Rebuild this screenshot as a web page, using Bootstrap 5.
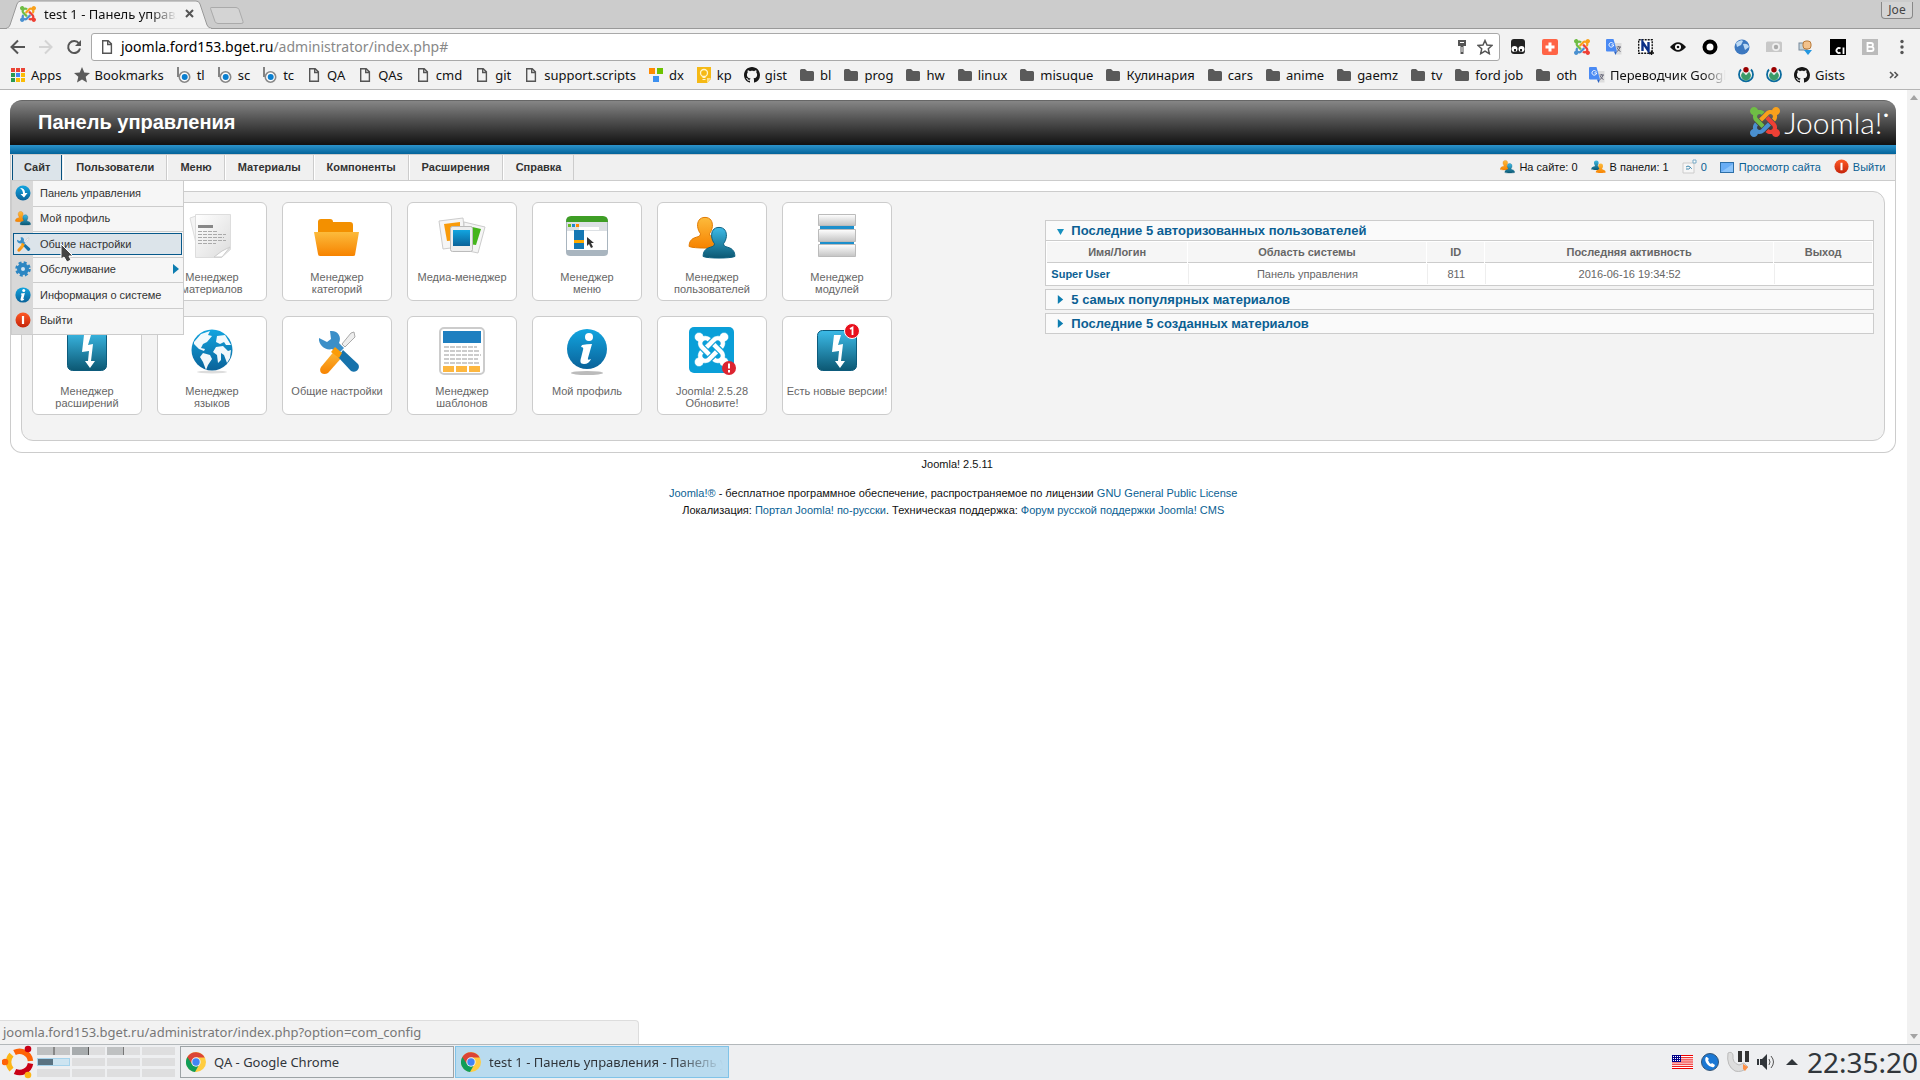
<!DOCTYPE html>
<html lang="ru">
<head>
<meta charset="utf-8">
<meta name="viewport" content="width=device-width, initial-scale=1">
<title>test 1 - Панель управления</title>
<link rel="stylesheet" href="https://cdn.jsdelivr.net/npm/bootstrap@5.3.0/dist/css/bootstrap.min.css">
<style>
:root{--ui:"Noto Sans",sans-serif;--web:"Liberation Sans",Arial,sans-serif;--line:#ccc;--link:#0b5f93}
body{font-family:var(--web);font-size:11px;line-height:16px;color:#111;background:#fff;overflow:hidden}
a{text-decoration:none;color:var(--link)}
svg{display:block;flex:none}
.chrome-ui{font-family:var(--ui);font-size:13px;background:#f2f2f2;color:#111}
.tabstrip{height:29px;background:#ccc;border-bottom:1px solid #999}
.tab{width:204px;height:29px;margin-left:6px;margin-bottom:-1px;padding:0 16px 2px 14px;font-size:13px}
.tab-shape,.tab>*{position:relative}
.tab .tab-shape{position:absolute;left:0;top:0}
.fade-end{white-space:nowrap;overflow:hidden;-webkit-mask-image:linear-gradient(90deg,#000 80%,transparent);mask-image:linear-gradient(90deg,#000 80%,transparent)}
.plain{border:0;background:none;padding:0;color:#555}
.new-tab{padding-top:7px}
.profile{margin:2px 7px 0 0;height:17px;width:32px;border:1px solid #888;border-top:0;border-radius:0 0 4px 4px;background:#d4d4d4;font-size:12px;line-height:16px;color:#444;padding:0}
.toolbar{padding:4px 10px 1px 9px}
.nav-keys{gap:12px}
.omnibox{height:28px;background:#fff;border:1px solid #a9a9a9;border-radius:3px;padding:0 6px 0 8px;margin:0 10px 0 9px;gap:7px}
.url{position:relative;height:26px}
.url input{position:absolute;inset:0;width:100%;border:0;background:none;color:transparent;outline:0;padding:0}
.url span{line-height:26px;font-size:14px;color:#888}
.url b{font-weight:400;color:#000}
.bookmarks{height:28px;padding:0 10px 1px;gap:12px;border-bottom:1px solid #b5b5b5}
.bookmarks a{display:flex;align-items:center;gap:5px;color:#111;white-space:nowrap;line-height:20px}
.bookmarks .fade-end{width:116px}
.viewport{flex:1;min-height:0;position:relative}
.scroller{width:15px;background:#f1f1f1;padding:5px 0}
.page{padding:10px 11px 0 10px;min-width:0}
.site-head{height:45px;border-radius:12px 12px 0 0;background:linear-gradient(#868686,#555 40%,#111);border-top:1px solid #666;padding:0 7px 2px 28px}
.site-head h1{font-size:20px;line-height:42px;font-weight:700;color:#fff;margin:0}
.wordmark{font-family:Lato,sans-serif;font-weight:300;font-size:30px;line-height:30px;color:#fff}
.wordmark sup{font-size:12px;top:-15px}
.blueline{height:9px;background:linear-gradient(#2c93cb,#02639a)}
.menubar{height:27px;background:#f0f0f0;border:1px solid var(--line)}
.main-menu{padding-left:1px}
.top-item{display:block;height:25px;line-height:25px;padding:0 12px;font-weight:700;color:#333;border-right:1px solid var(--line);border-left:1px solid #fff}
.top-item.current{padding:0 11px;margin-right:1px;background:#dce4ea;border:1px solid #07517f;border-width:0 1px}
.status a,.status span{display:flex;align-items:center;gap:4px}
.status{gap:13px;padding:0 10px 2px 0}
.frame{border:1px solid var(--line);border-top:0;border-radius:0 0 12px 12px;padding:10px 10px 11px}
.inner{border:1px solid var(--line);border-radius:12px;background:#f3f3f3;padding:10px;min-height:250px}
.tiles{gap:15px;width:55%;padding-right:100px;align-content:flex-start}
.tile{width:110px;height:99px;background:#fff;border:1px solid var(--line);border-radius:6px;color:#666;text-align:center;line-height:12px;padding-top:10px}
.tile:hover{color:#0b5f93}
.tile svg{margin:0 auto 10px}
.side{width:45%;padding-top:18px;display:flex;flex-direction:column;gap:3px}
.slider{border:1px solid var(--line);background:#fafafa}
.slider h2{font-size:13px;line-height:19px;font-weight:700;margin:0}
.slider h2 a{display:flex;align-items:center;gap:6px;padding-left:10px}
.grid-data{width:100%;border-top:1px solid var(--line);background:#fff;color:#666;text-align:center;border-collapse:separate;border-spacing:1px}
.grid-data th{height:21px;padding:0;background:#f6f6f6;border-bottom:1px solid var(--line)}
.grid-data td{height:20px;padding:0 4px;border-left:1px solid #eee}
.grid-data td:first-child{border:0;text-align:left;font-weight:700}
.submenu{position:absolute;left:0;top:26px;z-index:5;width:173px;height:154px;display:grid;grid-template-rows:repeat(6,1fr);border:1px solid var(--line);border-top:0;background:linear-gradient(90deg,#d8d8d8 21px,#f6f6f6 21px);margin:0;padding:0;list-style:none}
.submenu li{position:relative;background:linear-gradient(var(--line),var(--line)) 21px 100%/200px 1px no-repeat;padding:1px 1px 3px}
.submenu li:last-child{background:none}
.submenu a{display:flex;align-items:center;height:100%;gap:9px;color:#333;padding:0 1px 0 1px;border:1px solid transparent}
.submenu .hot{border-color:#07598b;background:#dce4ea}
.footer-text{text-align:center;padding-top:3px;line-height:17px}
.pointer-mark{position:absolute;left:60px;top:153px;z-index:9}
.hover-url{position:absolute;left:0;bottom:0;width:639px;height:24px;border:1px solid #ddd;border-width:1px 1px 0 0;border-radius:0 4px 0 0;background:#f2f2f2;color:#777;font:13px/23px var(--ui);padding-left:3px}
.taskbar{height:36px;background:#eeeff1;border-top:1px solid #b3b8bb;font-family:var(--ui);font-size:13px;color:#31363b;padding:0 0 1px 2px}
.pager{display:grid;grid-template-columns:repeat(4,33px);gap:3px 2px;margin:0 5px 0 3px}
.pager i{height:8px;background:#dededf}
.pager .w1{background:linear-gradient(90deg,#bfc1c2 50%,#888 50%,#888 54%,#c4c5c6 54%)}
.pager .w2{background:linear-gradient(90deg,#a7abad 48%,#555 48%,#555 52%,#dededf 52%)}
.pager .w3{background:linear-gradient(90deg,#bfc1c2 48%,#777 48%,#777 52%,#dededf 52%)}
.pager .now{background:linear-gradient(90deg,#5a7382 50%,#cde4f1 50%);outline:1px solid #a6d3ec;outline-offset:-1px}
.task{width:274px;height:32px;border:1px solid #9da3a6;background:#eeeff1;color:#31363b;text-align:left;padding:0 5px;margin-right:1px;border-radius:0}
.task.on{background:#b9dbef;border-color:#80c3e8}
.clock{font-size:28px;line-height:34px;margin-right:2px}
</style>
<script src="https://cdn.jsdelivr.net/npm/bootstrap@5.3.0/dist/js/bootstrap.bundle.min.js"></script>
</head>
<body class="vh-100 d-flex flex-column">
<svg width="0" height="0" class="position-absolute" aria-hidden="true">
<defs>
<linearGradient id="gBlue" x2="0" y2="1"><stop stop-color="#12a5e0"/><stop offset="1" stop-color="#0a6299"/></linearGradient>
<linearGradient id="gTeal" x2="0" y2="1"><stop stop-color="#3cbbe8"/><stop offset="1" stop-color="#0c5873"/></linearGradient>
<linearGradient id="gOr" x2="0" y2="1"><stop stop-color="#fcbb3c"/><stop offset="1" stop-color="#f78300"/></linearGradient>
<linearGradient id="gRed" x2="0" y2="1"><stop stop-color="#ff5a26"/><stop offset="1" stop-color="#c4240a"/></linearGradient>
<linearGradient id="gGrey" x2="0" y2="1"><stop stop-color="#fff"/><stop offset="1" stop-color="#c4c4c4"/></linearGradient>
<linearGradient id="gPaper" x2="1" y2="1"><stop stop-color="#fff"/><stop offset="1" stop-color="#dcdcdc"/></linearGradient>
<path id="jarm" d="M16.719 14.759L14.22 17.26l-2.37 2.37-.462.466c-1.368 1.365-3.297 1.83-5.047 1.397-.327 1.424-1.604 2.49-3.13 2.49C1.438 23.983 0 22.547 0 20.772c0-1.518 1.055-2.789 2.469-3.123-.446-1.76.016-3.705 1.396-5.08l.179-.18 2.37 2.37-.184.181c-.769.779-.769 2.024 0 2.789.771.78 2.022.78 2.787 0l.465-.465 2.367-2.371 2.502-2.506z"/>
</defs>
<symbol id="joomla" viewBox="0 0 24 24"><use href="#jarm" fill="#4a90d0"/><use href="#jarm" fill="#6fbd45" transform="rotate(90 12 12)"/><use href="#jarm" fill="#f9a11b" transform="rotate(180 12 12)"/><use href="#jarm" fill="#ee4035" transform="rotate(270 12 12)"/></symbol>
<symbol id="file" viewBox="0 0 16 16"><path d="M3.700 1.700h5.500l3.200 3.200v9.400H3.700zM8.700 2v3.500H12" fill="none" stroke="#555" stroke-width="1.400"/></symbol>
<symbol id="folder" viewBox="0 0 16 16"><path d="M1 3.500Q1 2 2.500 2H6l2 2h5.500Q15 4 15 5.500v7q0 1.500-1.500 1.500h-11Q1 14 1 12.500z" fill="#5a5a5a"/></symbol>
<symbol id="bico" viewBox="0 0 16 16"><path d="M2 0v10" stroke="#777" stroke-width="1.800"/><circle cx="8.500" cy="10" r="5.200" fill="#fff" stroke="#888" stroke-width="1.600"/><circle cx="8.700" cy="10" r="3" fill="#0a7fd0"/></symbol>
<symbol id="github" viewBox="0 0 16 16"><path fill="#161616" d="M8 0C3.580 0 0 3.580 0 8c0 3.540 2.290 6.530 5.470 7.590.4.070.55-.17.55-.38 0-.19-.01-.82-.01-1.490-2.010.37-2.530-.49-2.690-.94-.09-.23-.48-.94-.82-1.130-.28-.15-.68-.52-.01-.53.63-.01 1.080.58 1.230.82.72 1.210 1.870.87 2.330.66.07-.52.28-.87.51-1.070-1.780-.2-3.640-.89-3.640-3.950 0-.87.31-1.590.82-2.150-.08-.2-.36-1.020.08-2.120 0 0 .67-.21 2.200.82.64-.18 1.320-.27 2-.27s1.360.09 2 .27c1.530-1.040 2.200-.82 2.200-.82.44 1.100.16 1.920.08 2.120.51.56.82 1.270.82 2.150 0 3.070-1.870 3.750-3.650 3.950.29.25.54.73.54 1.480 0 1.070-.01 1.930-.01 2.200 0 .21.15.46.55.38A8.010 8.010 0 0 0 16 8c0-4.420-3.580-8-8-8z"/></symbol>
<symbol id="gtr" viewBox="0 0 16 16"><path d="M7 4h8.500v11.500H9z" fill="#dcdcdc"/><path d="M0 1Q0 0 1 0h6.500l3.500 12.500H1Q0 12.500 0 11.500z" fill="#4a8af4"/><path d="M8 12.500h3L9.500 16z" fill="#2b63c4"/><path d="M7.600 5.900H5.400M7.300 4.700A2.300 2.300 0 1 0 7.600 6" stroke="#fff" fill="none"/><path d="M10.500 8h4.500M12.700 7v1M14 8q-.5 3-3 4.500M11.300 9q1 2.500 3.200 3.500" stroke="#667" fill="none"/></symbol>
<symbol id="wm" viewBox="0 0 16 16"><path d="M3 2.500a7 7 0 1 0 10 0" fill="none" stroke="#0a6a9e" stroke-width="1.800"/><path d="M4.800 5.500a4.700 4.700 0 0 0 2.700 7.700V8zM11.200 5.500a4.700 4.700 0 0 1-2.700 7.700V8z" fill="#3a9a68" stroke="#3a9a68"/><circle cx="8" cy="2.700" r="2.700" fill="#900"/></symbol>
<symbol id="man" viewBox="0 0 24 24"><path d="M12 1c4 0 5.500 3 5.200 6.500-.2 2-1.200 4-2 5 0 1.500 1 2 3 2.500 3.500 1 5 3 5 6.500-3 1.500-19.400 1.500-22.400 0 0-3.500 1.500-5.500 5-6.500 2-.5 3-1 3-2.500-.8-1-1.800-3-2-5C6.500 4 8 1 12 1z"/></symbol>
<symbol id="users" viewBox="0 0 48 48"><use href="#man" x="0" y="0" width="34" height="40" fill="url(#gOr)" stroke="#e07800" stroke-width=".7"/><use href="#man" x="14" y="12" width="34" height="36" fill="url(#gTeal)" stroke="#0b5f80" stroke-width=".7"/></symbol>
<symbol id="users2" viewBox="0 0 48 48"><use href="#man" x="0" y="0" width="34" height="40" fill="url(#gTeal)"/><use href="#man" x="14" y="12" width="34" height="36" fill="url(#gOr)"/></symbol>
<symbol id="power" viewBox="0 0 16 16"><circle cx="8" cy="8" r="7.500" fill="url(#gRed)"/><path d="M8 4v8" stroke="#fff" stroke-width="2.200"/></symbol>
<symbol id="tools" viewBox="0 0 48 48"><path d="M41 5l-3 1-9 11 3 3L42 10z" fill="#eee" stroke="#aaa"/><path d="M23 22l8 6-16 18c-5 3-10-1-7-6z" fill="url(#gOr)"/><path d="M6 11l8 4 4-3-1-8c8-1 12 6 9 12l5 5-6 6-6-5c-6 2-14-4-13-11z" fill="#3b8fc8"/><path d="M30 23l15 14c3 4-2 10-7 7L25 30z" fill="#1672ab"/><path d="M22 20l7 6-3 5-8-6z" fill="#fb9c08"/></symbol>
<symbol id="info" viewBox="0 0 48 48"><ellipse cx="24" cy="46" rx="16" ry="2" fill="#bbb"/><circle cx="24" cy="22" r="20" fill="url(#gBlue)"/><circle cx="26" cy="10" r="4" fill="#fff"/><path d="M19 18q5-1 10-1l-4 14q-1 3 3 1-2 5-7 5c-4 0-4-3-3-6l2-8q1-3-2-3z" fill="#fff"/></symbol>
<symbol id="bolt" viewBox="0 0 48 48"><rect x="4.500" y="3.500" width="39" height="40" rx="5" fill="url(#gTeal)" stroke="#0d5b7c"/><path d="M21 8h7l-3 10 5-1-2 17h4l-5 7-5-7h3l1-10-7 1z" fill="#fff"/></symbol>
<symbol id="globe" viewBox="0 0 48 48"><ellipse cx="24" cy="45" rx="15" ry="1.500" fill="#ddd"/><circle cx="24" cy="23" r="20.500" fill="url(#gBlue)"/><path d="M6 15l7-8 9-3-2 4 4 1-5 6-4 2-2 4 4 1-1 2-5-2-5-5zM15 26l7 2 2 4-4 6-2 5-3-8-3-5zM29 9l8-1 6 10-5 0-2-3-4 2-4-2zM28 20l7-1 5 5 3-1-1 8-3 5-3-8-3-2v7l-3 3-1-8-4-3z" fill="#fff" opacity=".95"/></symbol>
<symbol id="tri" viewBox="0 0 8 10"><path d="M1 0l6 5-6 5z" fill="#0d7db0"/></symbol>
<symbol id="chrome" viewBox="0 0 20 20"><circle cx="10" cy="10" r="10" fill="#ffcd40"/><path d="M10 10L1.300 5A10 10 0 0 0 9 20l4.500-8z" fill="#109d58"/><path d="M1.300 5A10 10 0 0 1 18.700 5.500H10L6 12z" fill="#db4437"/><circle cx="10" cy="10" r="4.700" fill="#f1f1f1"/><circle cx="10" cy="10" r="3.700" fill="#4285f4"/></symbol>
</svg>

<header class="chrome-ui">
  <div class="tabstrip d-flex align-items-start">
    <div class="tab position-relative d-flex align-items-center">
      <svg class="tab-shape" width="206" height="29"><path d="M0 28.500Q3 28 4 25L11 4q1-3 4-3h175q3 0 4 3l7 21q1 3 5 3.500" fill="#f2f2f2" stroke="#999"/><path d="M1 29h204" stroke="#f2f2f2"/></svg>
      <svg width="16" height="16"><use href="#joomla"/></svg>
      <span class="fade-end ms-2 me-2 flex-fill">test 1 - Панель управления</span>
      <button class="plain" aria-label="Закрыть вкладку"><svg width="9" height="9"><path d="M1 1l7 7M8 1L1 8" stroke="#555" stroke-width="2"/></svg></button>
    </div>
    <button class="plain new-tab" aria-label="Новая вкладка"><svg width="34" height="17"><path d="M.500 1.500Q0 .500 2 .500h24q2 0 3 2l4 12q1 2-2 2H8q-2 0-3-2z" fill="#d4d4d4" stroke="#aaa"/></svg></button>
    <button class="profile ms-auto">Joe</button>
  </div>
  <div class="toolbar d-flex align-items-center">
    <div class="nav-keys d-flex align-items-center">
      <button class="plain" aria-label="Назад"><svg width="17" height="16"><path d="M16 8H3M9 1.500L2.500 8 9 14.500" fill="none" stroke="#555" stroke-width="2"/></svg></button>
      <button class="plain" aria-label="Вперёд"><svg width="16" height="16"><path d="M1 8h12M7 1.500L13.500 8 7 14.500" fill="none" stroke="#d4d4d4" stroke-width="2"/></svg></button>
      <button class="plain" aria-label="Обновить"><svg width="16" height="16"><path d="M13 4.500A6 6 0 1 0 14 9.500" fill="none" stroke="#555" stroke-width="2"/><path d="M15 1v6H9z" fill="#555"/></svg></button>
    </div>
    <div class="omnibox d-flex align-items-center flex-fill">
      <svg width="14" height="16" viewBox="1 0 14 16"><use href="#file" width="16" height="16"/></svg>
      <label class="url flex-fill"><span><b>joomla.ford153.bget.ru</b>/administrator/index.php#</span><input type="text" aria-label="Адрес"></label>
      <div class="d-flex align-items-center gap-2"><svg width="14" height="16"><path d="M3 1h8v6H8.500v8h-3V7H3z" fill="#555"/><path d="M5 3.500h4M7 8v5" stroke="#fff"/></svg>
      <svg width="16" height="16"><path d="M8 1.500l2 4.500 5 .5-3.700 3.300 1 4.900L8 12.200l-4.300 2.500 1-4.900L1 6.500 6 6z" fill="none" stroke="#555" stroke-width="1.500"/></svg></div>
    </div>
    <div class="d-flex align-items-center gap-3">
      <svg width="16" height="16"><rect x="1" y="0" width="14" height="15" rx="3" fill="#222"/><circle cx="4.500" cy="10" r="3" fill="#fff"/><circle cx="11.500" cy="10" r="3" fill="#fff"/><path d="M4 10h2v2.500H4zM10 10h2v2.500h-2z" fill="#222"/></svg>
      <svg width="16" height="16"><rect width="16" height="16" rx="2" fill="#ff6446"/><path d="M8 3.500v9M3.500 8h9" stroke="#fff" stroke-width="3"/></svg>
      <svg width="16" height="16"><use href="#joomla"/></svg>
      <svg width="16" height="16"><use href="#gtr"/></svg>
      <svg width="16" height="16"><rect x=".7" y=".7" width="13.500" height="13.500" fill="#fff" stroke="#111" stroke-width="1.400" stroke-dasharray="2 1"/><path d="M4.500 12V3l6 9V3" fill="none" stroke="#0b2f86" stroke-width="2.400"/><path d="M11 14h5M13.500 11.500v5" stroke="#111" stroke-width="1.500"/></svg>
      <svg width="16" height="16"><path d="M0 8q8-9.500 16 0-8 9.500-16 0z" fill="#111"/><circle cx="8" cy="8" r="3" fill="#fff"/><circle cx="8" cy="8" r="1.300" fill="#111"/></svg>
      <svg width="16" height="16"><circle cx="8" cy="8" r="5.500" fill="#fff" stroke="#000" stroke-width="4"/></svg>
      <svg width="16" height="16"><circle cx="8" cy="8" r="7.500" fill="#3c78c0"/><path d="M2 4q5-4 7-2l-2 4-4 2zM9 5q5-1 6 3l-4 3z" fill="#bcd9f4"/></svg>
      <svg width="16" height="16"><path d="M0 4q0-1.500 1.500-1.500h13Q16 2.500 16 4v9H0z" fill="#c8c8c8"/><circle cx="10" cy="8" r="4" fill="#eee"/><circle cx="10" cy="8" r="2.200" fill="#aaa"/></svg>
      <svg width="16" height="16"><rect x="1" y="4" width="8" height="7" fill="#c5d4dc" stroke="#789"/><rect x="5" y="2" width="8" height="8" rx="3" fill="#f3c28c" stroke="#b87a3a"/><path d="M6 11h8l-4 5z" fill="#2497e0"/></svg>
      <svg width="16" height="16"><rect width="16" height="16" fill="#000"/><path d="M10.500 9.500a2.500 2.500 0 1 0 0 4M13.500 8.500V15" stroke="#fff" stroke-width="1.800" fill="none"/></svg>
      <svg width="16" height="16"><rect width="16" height="16" fill="#bbb"/><path d="M5.500 4h3.500a1.900 1.900 0 0 1 0 3.900H5.500zM5.500 7.900h4a2 2 0 0 1 0 4.100h-4z" fill="none" stroke="#fff" stroke-width="1.800"/></svg>
      <button class="plain" aria-label="Меню"><svg width="16" height="16"><g fill="#555"><circle cx="8" cy="2.500" r="1.700"/><circle cx="8" cy="8" r="1.700"/><circle cx="8" cy="13.500" r="1.700"/></g></svg></button>
    </div>
  </div>
  <nav class="bookmarks d-flex align-items-center">
    <a href="#"><svg width="16" height="16"><g fill="#ea4335"><path d="M1 1h4v4H1zM6 1h4v4H6zM11 1h4v4h-4z"/></g><path d="M1 6h4v4H1zM1 11h4v4H1z" fill="#2b9a50"/><path d="M6 6h4v4H6z" fill="#4285f4"/><path d="M11 6h4v4h-4zM6 11h4v4H6zM11 11h4v4h-4z" fill="#fbbc05"/></svg>Apps</a>
    <a href="#"><svg width="16" height="16"><path d="M8 0l2.300 5.500 5.700.5-4.300 3.800L13 15.500 8 12.500l-5 3 1.300-5.700L0 6l5.700-.5z" fill="#5a5a5a"/></svg>Bookmarks</a>
    <a href="#"><svg width="16" height="16"><use href="#bico"/></svg>tl</a>
    <a href="#"><svg width="16" height="16"><use href="#bico"/></svg>sc</a>
    <a href="#"><svg width="16" height="16"><use href="#bico"/></svg>tc</a>
    <a href="#"><svg width="16" height="16"><use href="#file"/></svg>QA</a>
    <a href="#"><svg width="16" height="16"><use href="#file"/></svg>QAs</a>
    <a href="#"><svg width="16" height="16"><use href="#file"/></svg>cmd</a>
    <a href="#"><svg width="16" height="16"><use href="#file"/></svg>git</a>
    <a href="#"><svg width="16" height="16"><use href="#file"/></svg>support.scripts</a>
    <a href="#"><svg width="16" height="16"><path d="M1 1h6v6H1z" fill="#ff8a00"/><path d="M9 1h6v6H9z" fill="#6cc200"/><path d="M5 9h6v6H5z" fill="#3d90f0"/></svg>dx</a>
    <a href="#"><svg width="16" height="16"><path d="M1 0h14v12l-4 4H1z" fill="#f5b915"/><path d="M15 11h-4v5z" fill="#ffe08a"/><circle cx="8" cy="6" r="3.500" fill="none" stroke="#fff5cc" stroke-width="1.300"/><path d="M6.500 10.500h3M6.500 12.500h3" stroke="#fff5cc"/></svg>kp</a>
    <a href="#"><svg width="16" height="16"><use href="#github"/></svg>gist</a>
    <a href="#"><svg width="16" height="16"><use href="#folder"/></svg>bl</a>
    <a href="#"><svg width="16" height="16"><use href="#folder"/></svg>prog</a>
    <a href="#"><svg width="16" height="16"><use href="#folder"/></svg>hw</a>
    <a href="#"><svg width="16" height="16"><use href="#folder"/></svg>linux</a>
    <a href="#"><svg width="16" height="16"><use href="#folder"/></svg>misuque</a>
    <a href="#"><svg width="16" height="16"><use href="#folder"/></svg>Кулинария</a>
    <a href="#"><svg width="16" height="16"><use href="#folder"/></svg>cars</a>
    <a href="#"><svg width="16" height="16"><use href="#folder"/></svg>anime</a>
    <a href="#"><svg width="16" height="16"><use href="#folder"/></svg>gaemz</a>
    <a href="#"><svg width="16" height="16"><use href="#folder"/></svg>tv</a>
    <a href="#"><svg width="16" height="16"><use href="#folder"/></svg>ford job</a>
    <a href="#"><svg width="16" height="16"><use href="#folder"/></svg>oth</a>
    <a href="#"><svg width="16" height="16"><use href="#gtr"/></svg><span class="fade-end">Переводчик Google</span></a>
    <a href="#" aria-label="Wikimedia"><svg width="16" height="16"><use href="#wm"/></svg></a>
    <a href="#" aria-label="Wikimedia"><svg width="16" height="16"><use href="#wm"/></svg></a>
    <a href="#"><svg width="16" height="16"><use href="#github"/></svg>Gists</a>
    <button class="plain ms-auto me-2" aria-label="Ещё закладки"><svg width="16" height="10"><path d="M4 2l3 3-3 3M8.500 2l3 3-3 3" fill="none" stroke="#555" stroke-width="1.600"/></svg></button>
  </nav>
</header>

<div class="viewport d-flex">
  <main class="page flex-fill">
    <div class="site-head d-flex align-items-center justify-content-between">
      <h1>Панель управления</h1>
      <div class="d-flex align-items-center gap-1"><svg width="30" height="30"><use href="#joomla"/></svg><span class="wordmark">Joomla!<sup>•</sup></span></div>
    </div>
    <div class="blueline"></div>
    <div class="menubar d-flex justify-content-between">
      <nav class="main-menu d-flex position-relative">
        <a class="top-item current" href="#">Сайт</a><a class="top-item" href="#">Пользователи</a><a class="top-item" href="#">Меню</a><a class="top-item" href="#">Материалы</a><a class="top-item" href="#">Компоненты</a><a class="top-item" href="#">Расширения</a><a class="top-item" href="#">Справка</a>
        <ul class="submenu">
          <li><a href="#"><svg width="16" height="16"><circle cx="8" cy="8" r="7.500" fill="url(#gBlue)"/><path d="M5 3q5 0 5 5h2.500L9 12.500 5.500 9H8Q8 5 5 3z" fill="#fff"/></svg>Панель управления</a></li>
          <li><a href="#"><svg width="16" height="16"><use href="#users"/></svg>Мой профиль</a></li>
          <li><a class="hot" href="#"><svg width="16" height="16"><use href="#tools"/></svg>Общие настройки</a></li>
          <li><a href="#"><svg width="16" height="16"><circle cx="8" cy="8" r="6" fill="none" stroke="#2c86c2" stroke-width="3.500" stroke-dasharray="2.700 2"/><circle cx="8" cy="8" r="4" fill="#cfe4f2" stroke="#2c86c2" stroke-width="4"/></svg>Обслуживание<svg class="ms-auto" width="8" height="10"><use href="#tri"/></svg></a></li>
          <li><a href="#"><svg width="16" height="16" viewBox="3 1 42 42"><use href="#info" width="48" height="48"/></svg>Информация о системе</a></li>
          <li><a href="#"><svg width="16" height="16"><use href="#power"/></svg>Выйти</a></li>
        </ul>
      </nav>
      <div class="status d-flex align-items-center">
        <span><svg width="15" height="15"><use href="#users"/></svg>На сайте: 0</span>
        <span><svg width="15" height="15"><use href="#users2"/></svg>В панели: 1</span>
        <a href="#"><svg width="15" height="15"><path d="M1 4h11v10H1z" fill="#f6f6f6" stroke="#ccc"/><path d="M4 8q2-2 4 0t2 2M4 10q3 1 5-2" stroke="#3b86ad" fill="none"/><path d="M11 1h3v3h-3z" fill="#fff" stroke="#77a9c6"/></svg>0</a>
        <a href="#"><svg width="15" height="15"><rect x=".5" y="3.500" width="13" height="10" fill="#68adf5" stroke="#2d6fa8"/><path d="M1 13L13 5v8z" fill="#8cc4fa"/></svg>Просмотр сайта</a>
        <a href="#"><svg width="15" height="15" viewBox="0 0 16 16"><use href="#power" width="16" height="16"/></svg>Выйти</a>
      </div>
    </div>
    <div class="frame">
      <div class="inner d-flex">
        <div class="tiles d-flex flex-wrap">
          <a class="tile" href="#"><svg width="48" height="48"><path d="M8 3h28v40H8z" fill="#f4f4f4" stroke="#ddd"/></svg>Добавить<br>материал</a>
          <a class="tile" href="#"><svg width="48" height="48"><path d="M2 5l6-2 20 38-17 2z" fill="#f4f4f4" stroke="#ddd"/><path d="M7.500 1.500h35v35l-9 8H7.500z" fill="url(#gPaper)" stroke="#ddd"/><path d="M42 34l-8 4-8 6h8z" fill="#fff" stroke="#ccc"/><path d="M10 13.500h15" stroke="#888" stroke-width="3"/><path d="M10 18.500h20M10 21.500h28M10 24.500h26M10 27.500h28M10 30.500h18" stroke="#aaa" stroke-dasharray="4 1"/></svg>Менеджер<br>материалов</a>
          <a class="tile" href="#"><svg width="48" height="48"><path d="M5 21V9q0-3 3-3h9q3 0 3 3h17q3 0 3 3v9z" fill="#f39000"/><path d="M1 19h45l-4 23q0 1-2 1H7q-2 0-2-2z" fill="url(#gOr)"/></svg>Менеджер<br>категорий</a>
          <a class="tile" href="#"><svg width="48" height="48"><g stroke="#ccc"><path d="M1 8l24-3 3 28-23 3z" fill="#f5f5f5"/><path d="M26 9l21 5-7 26-14-3z" fill="#f5f5f5"/></g><path d="M6 11l16-2v18l-13 1z" fill="#f99b0a"/><path d="M30 13l13 3-5 16-8-1z" fill="#45b51c"/><rect x="12.500" y="13.500" width="22" height="25" rx="2" fill="#eee" stroke="#bbb"/><rect x="15" y="17" width="17" height="16" fill="url(#gBlue)"/></svg>Медиа-менеджер</a>
          <a class="tile" href="#"><svg width="48" height="48"><rect x="3" y="4" width="42" height="39" rx="4" fill="#a9b5bf"/><path d="M3 9q0-6 5-6h32q5 0 5 6z" fill="#3e9e25"/><path d="M4 9h40v9H4z" fill="#dce0e4"/><path d="M4 18h40v19H4z" fill="#fff"/><path d="M5 11h3v3H5z" fill="#6b2"/><path d="M9 11h3v3H9z" fill="#28c"/><path d="M13 11h3v3h-3z" fill="#f80"/><path d="M11 17h10v19H11z" fill="#1578b4"/><path d="M11 27h10v3H11z" fill="#fa0"/><path d="M24 24v9l2-2 2 4 2-1-2-4h3z" fill="#333"/><path d="M16 14h20v3H16z" fill="#fff"/></svg>Менеджер<br>меню</a>
          <a class="tile" href="#"><svg width="48" height="48"><use href="#users"/></svg>Менеджер<br>пользователей</a>
          <a class="tile" href="#"><svg width="48" height="48"><path d="M7 12h34v24H7z" fill="#1c8fcc"/><g fill="url(#gGrey)" stroke="#bbb"><path d="M5.500 1.500h37v11h-37z"/><path d="M5.500 16.500h37v12h-37z"/><path d="M5.500 31.500h37v12h-37z"/></g></svg>Менеджер<br>модулей</a>
          <a class="tile" href="#"><svg width="48" height="48"><use href="#bolt"/></svg>Менеджер<br>расширений</a>
          <a class="tile" href="#"><svg width="48" height="48"><use href="#globe"/></svg>Менеджер<br>языков</a>
          <a class="tile" href="#"><svg width="48" height="48"><use href="#tools"/></svg>Общие настройки</a>
          <a class="tile" href="#"><svg width="48" height="48"><rect x="2" y="1" width="44" height="46" rx="4" fill="#fff" stroke="#ccc" stroke-width="2"/><path d="M5 4h38v12H5z" fill="#1e7fc0"/><path d="M6 20h33M6 24h36M6 28h37M6 32h34M6 36h35" stroke="#999" stroke-dasharray="5 1"/><path d="M5 39h11v6H5zM18 39h11v6H18zM31 39h11v6H31z" fill="#fdb740"/></svg>Менеджер<br>шаблонов</a>
          <a class="tile" href="#"><svg width="48" height="48"><use href="#info"/></svg>Мой профиль</a>
          <a class="tile" href="#"><svg width="48" height="48"><rect x="1" y="0" width="45" height="46" rx="5" fill="#0a9fd8"/><g transform="translate(6.500 5.500) scale(1.420)" fill="#fff" stroke="#0a9fd8" stroke-width=".3"><use href="#jarm"/><use href="#jarm" transform="rotate(90 12 12)"/><use href="#jarm" transform="rotate(180 12 12)"/><use href="#jarm" transform="rotate(270 12 12)"/></g><circle cx="41" cy="41" r="7" fill="#dc2430"/><path d="M41 36.500v5M41 43v2.500" stroke="#fff" stroke-width="2"/></svg>Joomla! 2.5.28<br>Обновите!</a>
          <a class="tile" href="#"><svg class="overflow-visible" width="48" height="48"><use href="#bolt"/><circle cx="39" cy="4" r="7.500" fill="#e8101c" stroke="#fff"/><path d="M37 2l2.500-1.500V8" fill="none" stroke="#fff" stroke-width="1.800"/></svg>Есть новые версии!</a>
        </div>
        <aside class="side">
          <section class="slider">
            <h2><a href="#"><svg width="9" height="8"><path d="M1 2h7L4.500 8z" fill="#1790bf"/></svg>Последние 5 авторизованных пользователей</a></h2>
            <table class="grid-data">
              <colgroup><col style="width:17%"><col style="width:29%"><col style="width:7%"><col style="width:35%"><col style="width:12%"></colgroup>
              <thead><tr><th>Имя/Логин</th><th>Область системы</th><th>ID</th><th>Последняя активность</th><th>Выход</th></tr></thead>
              <tbody><tr><td><a href="#">Super User</a></td><td>Панель управления</td><td>811</td><td>2016-06-16 19:34:52</td><td></td></tr></tbody>
            </table>
          </section>
          <section class="slider"><h2><a href="#"><svg width="9" height="9"><use href="#tri"/></svg>5 самых популярных материалов</a></h2></section>
          <section class="slider"><h2><a href="#"><svg width="9" height="9"><use href="#tri"/></svg>Последние 5 созданных материалов</a></h2></section>
        </aside>
      </div>
    </div>
    <footer class="footer-text">
      <p class="mb-2 pb-1 ps-2">Joomla! 2.5.11</p>
      <div><a href="#">Joomla!®</a> - бесплатное программное обеспечение, распространяемое по лицензии <a href="#">GNU General Public License</a></div>
      <div>Локализация: <a href="#">Портал Joomla! по-русски</a>. Техническая поддержка: <a href="#">Форум русской поддержки Joomla! CMS</a></div>
    </footer>
  </main>
  <div class="scroller d-flex flex-column justify-content-between align-items-center"><svg width="8" height="5"><path d="M0 5h8L4 0z" fill="#a3a3a3"/></svg><svg width="8" height="5"><path d="M0 0h8L4 5z" fill="#a3a3a3"/></svg></div>
  <svg class="pointer-mark" width="14" height="22"><path d="M1 1v15l3-2 3 5 4-2-2-4h4z" fill="#444" stroke="#fff"/></svg>
  <div class="hover-url">joomla.ford153.bget.ru/administrator/index.php?option=com_config</div>
</div>

<footer class="taskbar d-flex align-items-center">
  <button class="plain" aria-label="Меню приложений"><svg width="32" height="34"><g fill="none" stroke-width="5.500"><path d="M9.500 9.500a11 11 0 0 0 0 15" stroke="#fdb515"/><path d="M12.500 7.500A11 11 0 0 1 28.500 16" stroke="#ff6307"/><path d="M28.500 18.500A11 11 0 0 1 13 26.500" stroke="#c90016"/></g><circle cx="3" cy="17" r="3.300" fill="#ff6307"/><circle cx="26" cy="4" r="3.300" fill="#c90016"/><circle cx="26" cy="30" r="3.300" fill="#fdb515"/></svg></button>
  <div class="pager"><i class="w1"></i><i class="w2"></i><i class="w3"></i><i></i><i class="now"></i><i></i><i></i><i></i><i></i><i></i><i></i><i></i></div>
  <button class="task d-flex align-items-center"><svg class="me-1" width="20" height="20"><use href="#chrome"/></svg><span class="ms-1">QA - Google Chrome</span></button>
  <button class="task on d-flex align-items-center"><svg class="me-1" width="20" height="20"><use href="#chrome"/></svg><span class="fade-end ms-1 flex-fill">test 1 - Панель управления - Панель управления</span></button>
  <div class="ms-auto d-flex align-items-center">
    <svg class="me-2" width="21" height="14"><path d="M0 0h21v14H0z" fill="#fff"/><path d="M0 .5h21M0 2.700h21M0 4.900h21M0 7h21M0 9.200h21M0 11.400h21M0 13.500h21" stroke="#e00"/><path d="M0 0h9v7H0z" fill="#008"/><path d="M1 1.500h8M1 3.500h8M1 5.500h8" stroke="#fff" stroke-dasharray="1 1"/></svg>
    <svg class="me-2" width="18" height="18"><circle cx="9" cy="9" r="8.500" fill="#1b78d4" stroke="#357"/><path d="M5 4q-2 3 1 7t7 3l1-2-3-2-1 1q-2-1-3-4l1-1-2-2z" fill="#fff"/></svg>
    <svg class="me-2" width="22" height="22"><path d="M1 2q4-2 5 2-1 8 6 10l5-2 4 4q-6 6-13 4Q-1 15 1 2z" fill="#ddd" stroke="#bbb"/><path d="M16 13l5 3-3 4-2-2z" fill="#ff8f45"/><path d="M11 0h4v11h-4zM18 0h4v11h-4z" fill="#333"/></svg>
    <svg width="18" height="18"><path d="M0 6h2v6H0zM3 6h2l5-5v16l-5-5H3z" fill="#31363b"/><path d="M12 6q2 3 0 6M14 3q5 6 0 12" stroke="#555" fill="none"/></svg>
    <svg class="ms-2 me-2" width="16" height="8"><path d="M3 7h12L9 1z" fill="#31363b"/></svg>
    <time class="clock">22:35:20</time>
  </div>
</footer>
</body>
</html>
